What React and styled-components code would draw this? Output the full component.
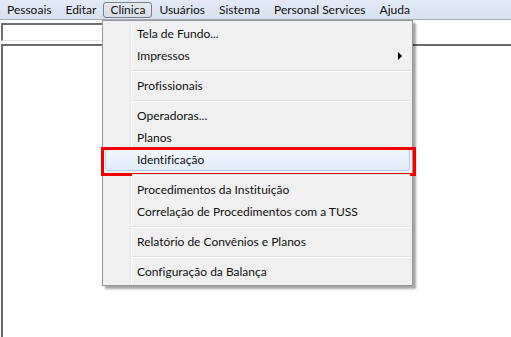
import React from "react";
import styled, { createGlobalStyle } from "styled-components";

const Global = createGlobalStyle`
  html, body { margin: 0; padding: 0; background: #ffffff; }
  body {
    font-family: "Lato", "Segoe UI", "Noto Sans", sans-serif;
    font-size: 12px;
    color: #000;
    font-variant-ligatures: none;
    font-feature-settings: "liga" 0, "clig" 0;
  }
`;

const Screen = styled.div`
  position: relative;
  width: 511px;
  height: 337px;
  overflow: hidden;
  background: #ffffff;
  display: flex;
  flex-direction: column;
`;

const MenuBar = styled.div`
  display: flex;
  align-items: flex-start;
  height: 20px;
  flex: none;
  background: linear-gradient(#e3eaf6, #d8e1ef);
  border-bottom: 1px solid #a7abb0;
  box-sizing: border-box;
`;

const BarItem = styled.div`
  margin-top: 2px;
  height: 16px;
  box-sizing: border-box;
  padding: 0 6px;
  border: 1px solid ${(p) => (p.$open ? "#7c7f84" : "transparent")};
  border-radius: 3px;
  background: ${(p) => (p.$open ? "linear-gradient(#e6eaf0, #d9dee6)" : "transparent")};
  line-height: 14px;
  white-space: nowrap;
  color: #111;
`;

const Content = styled.div`
  flex: 1;
  display: flex;
  flex-direction: column;
  padding: 3px 0 0 1px;
  gap: 3px;
`;

const TextBox = styled.div`
  width: 320px;
  height: 18px;
  box-sizing: border-box;
  background: #fff;
  border-top: 2px solid #6e6e6e;
  border-left: 2px solid #6e6e6e;
  border-bottom: 1px solid #e3e3e3;
  border-right: 1px solid #e3e3e3;
`;

const Panel = styled.div`
  flex: 1;
  background: #fff;
  border-top: 2px solid #6b6b6b;
  border-left: 2px solid #6b6b6b;
`;

const Dropdown = styled.div`
  position: absolute;
  top: 20px;
  left: 102px;
  width: 311px;
  box-sizing: border-box;
  border: 1px solid #979797;
  background: #f0f0f0;
  padding: 2px;
  box-shadow: 3px 3px 2px rgba(0, 0, 0, 0.35);
  display: flex;
  flex-direction: column;

  &::before {
    content: "";
    position: absolute;
    top: 2px;
    bottom: 2px;
    left: 27px;
    width: 1px;
    background: #e2e3e3;
    box-shadow: 1px 0 0 #ffffff;
  }
`;

const Item = styled.div`
  position: relative;
  height: 22px;
  line-height: 22px;
  padding-left: 32px;
  box-sizing: border-box;
  border: 1px solid ${(p) => (p.$hover ? "#aecff0" : "transparent")};
  border-radius: 3px;
  background: ${(p) => (p.$hover ? "linear-gradient(#f3f7fc, #e1ebf7)" : "transparent")};
  white-space: nowrap;
  color: #111;
  z-index: 1;
`;

const ItemText = styled.span`
  position: relative;
  top: -1px;
  margin-left: -1px;
`;

const Arrow = styled.svg`
  position: absolute;
  right: 7px;
  top: 6px;
`;

const Separator = styled.div`
  height: 8px;
  margin-left: 27px;
  display: flex;
  flex-direction: column;
  justify-content: center;
  position: relative;
  z-index: 1;

  &::before {
    content: "";
    display: block;
    height: 1px;
    background: #e0e0e0;
    border-bottom: 1px solid #ffffff;
  }
`;

const Callout = styled.div`
  position: absolute;
  left: -5px;
  top: -3px;
  right: -7px;
  bottom: -6px;
  border: 3px solid #f00000;
  pointer-events: none;
`;

const barItems = ["Pessoais", "Editar", "Clínica", "Usuários", "Sistema", "Personal Services", "Ajuda"];

const menu = [
  { t: "Tela de Fundo..." },
  { t: "Impressos", sub: true },
  { sep: true },
  { t: "Profissionais" },
  { sep: true },
  { t: "Operadoras..." },
  { t: "Planos" },
  { t: "Identificação", hover: true },
  { sep: true },
  { t: "Procedimentos da Instituição" },
  { t: "Correlação de Procedimentos com a TUSS" },
  { sep: true },
  { t: "Relatório de Convênios e Planos" },
  { sep: true },
  { t: "Configuração da Balança" },
];

export default function App() {
  return (
    <Screen>
      <Global />
      <MenuBar>
        {barItems.map((b) => (
          <BarItem key={b} $open={b === "Clínica"}>
            {b}
          </BarItem>
        ))}
      </MenuBar>
      <Content>
        <TextBox />
        <Panel />
      </Content>
      <Dropdown>
        {menu.map((m, i) =>
          m.sep ? (
            <Separator key={i} />
          ) : (
            <Item key={i} $hover={m.hover}>
              <ItemText>{m.t}</ItemText>
              {m.sub && (
                <Arrow width="4" height="8" viewBox="0 0 4 8">
                  <polygon points="0,0 4,4 0,8" fill="#000" />
                </Arrow>
              )}
              {m.hover && <Callout />}
            </Item>
          )
        )}
      </Dropdown>
    </Screen>
  );
}
